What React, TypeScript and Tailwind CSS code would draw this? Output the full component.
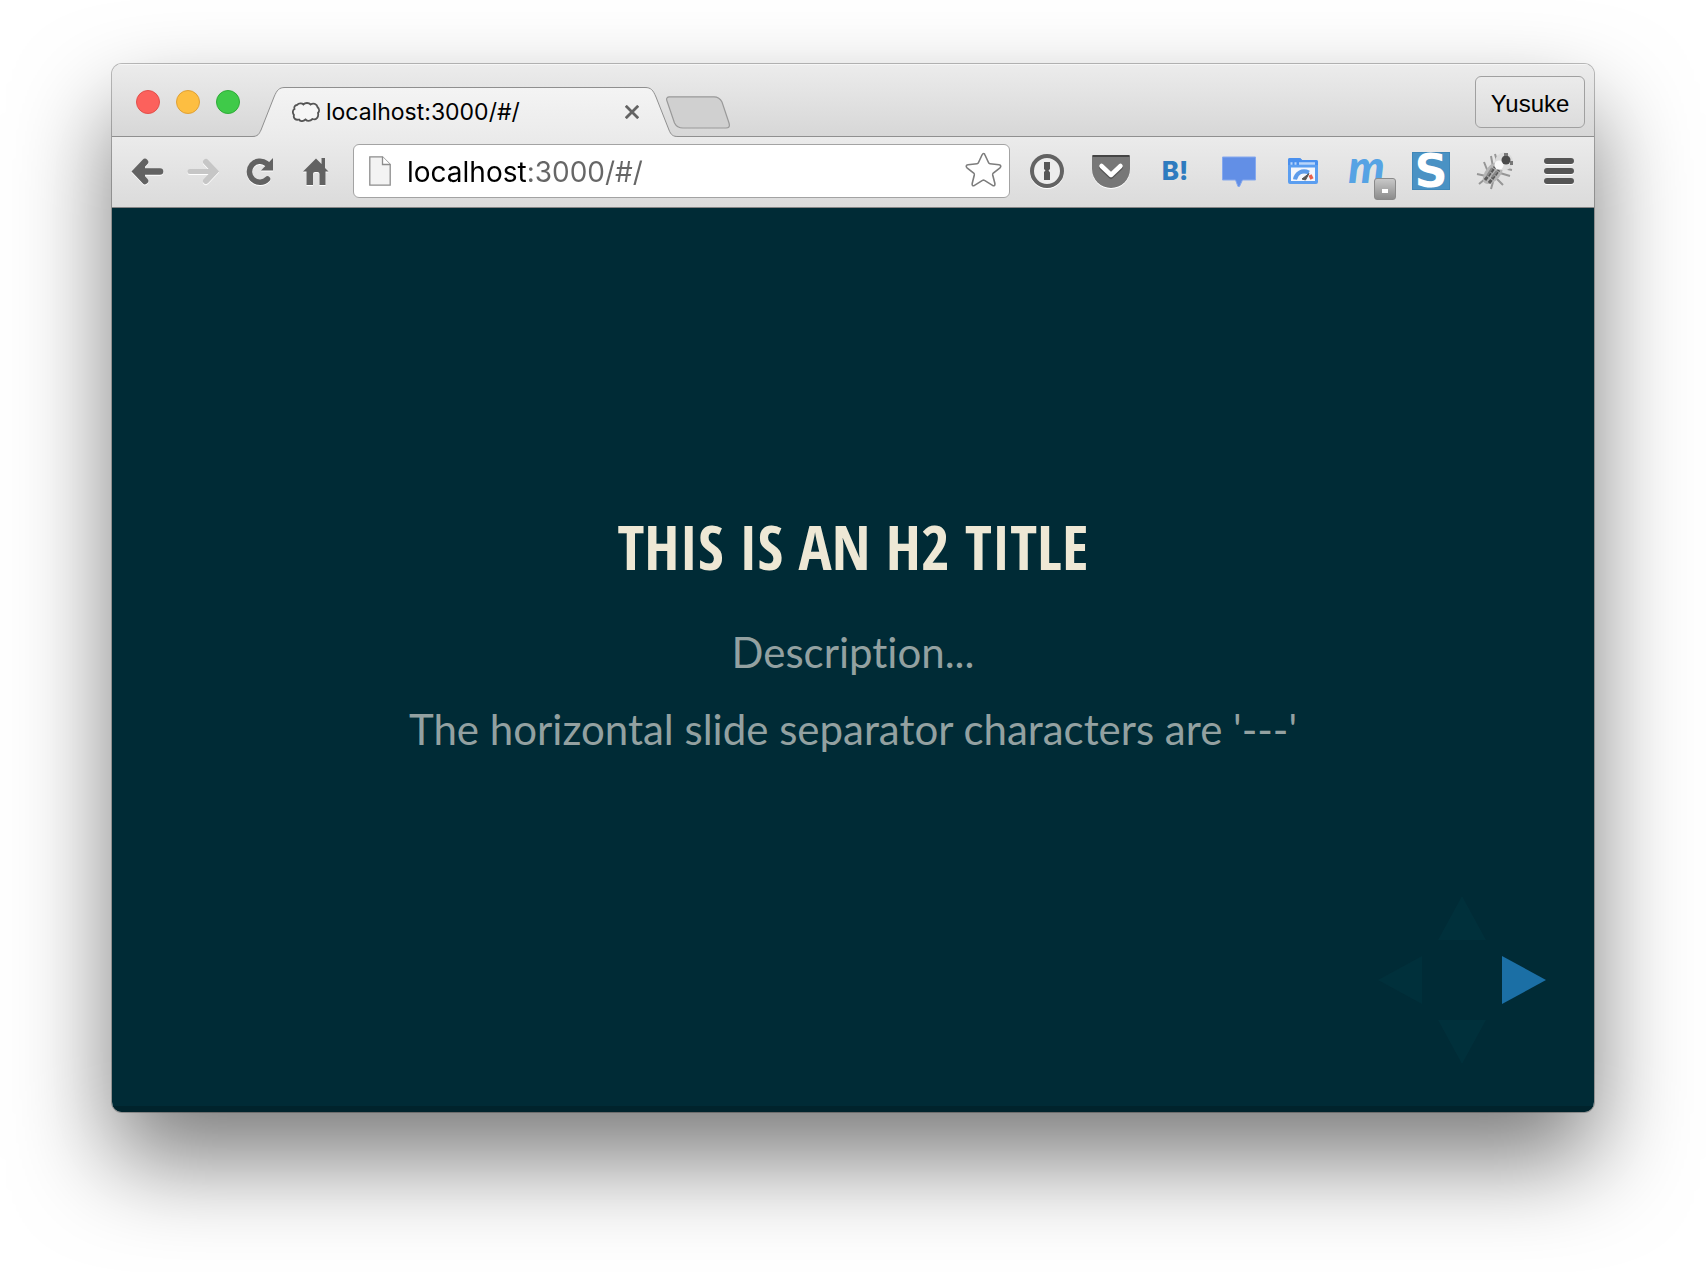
import type { ReactNode } from 'react';

const ToolbarButton = ({ label, wide, disabled, children }: { label: string; wide?: boolean; disabled?: boolean; children: ReactNode }) => (
  <button
    aria-label={label}
    disabled={disabled}
    className={`relative flex h-[54px] shrink-0 items-center justify-center ${wide ? 'w-16' : 'w-14'}`}
  >
    {children}
  </button>
);

const Icon = ({ children, className = '' }: { children: ReactNode; className?: string }) => (
  <svg viewBox="0 0 40 40" className={`size-10 ${className}`} fill="none" aria-hidden="true">
    {children}
  </svg>
);

const embossed = 'text-[#626262] drop-shadow-[0_1px_0_#fff]';

const Tab = () => (
  <div className="relative z-10 -mb-px ml-4 flex h-[50px] w-[420px] shrink-0 items-center pl-9 pr-[37px]">
    <svg viewBox="0 0 420 50" className="absolute inset-0 h-full w-full overflow-visible" aria-hidden="true">
      <defs>
        <linearGradient id="tab" x1="0" y1="0" x2="0" y2="1">
          <stop offset="0" stopColor="#f4f4f4" />
          <stop offset="1" stopColor="#ebebeb" />
        </linearGradient>
      </defs>
      <path
        d="M-4 50V49.500C2 49.500 3 47 5 43L18 10C21 3 23 .5 29 .5H389C395 .5 397 3 400 10L413 43C415 48 417 49.500 422 49.500V50Z"
        fill="url(#tab)"
      />
      <path
        d="M-4 49.500C2 49.500 3 47 5 43L18 10C21 3 23 .5 29 .5H389C395 .5 397 3 400 10L413 43C415 48 417 49.500 422 49.500"
        fill="none"
        stroke="#8f8f8f"
      />
    </svg>
    <svg viewBox="0 0 28 20" className="relative mr-1.5 h-5 w-7" aria-hidden="true">
      <path
        d="M5 3C7 1 10 1 11.500 2.500C13 .5 17 .5 18.500 2.500C21 .8 25 1.500 25.500 5C27.500 7 27.500 9.500 26 11C27 15 24 18.500 20.500 17C18 19.500 15 19 13.500 17.500C11 19.800 8 19.500 7 17.500C3.500 18.500 1 16 2 13C.3 11 .5 8 2.500 7C1.800 5 3 3.200 5 3Z"
        fill="#f6f6f6"
        stroke="#555"
        strokeWidth="1.800"
      />
    </svg>
    <span className="relative flex-1 text-left text-[23px] leading-7 text-black">localhost:3000/#/</span>
    <button aria-label="Close tab" className="relative size-[14px]">
      <svg viewBox="0 0 14 14" className="size-[14px]" aria-hidden="true">
        <path d="M.8 .8L13.200 13.200M13.200 .8L.8 13.200" stroke="#636363" strokeWidth="2.800" />
      </svg>
    </button>
  </div>
);

const TitleBar = () => (
  <header className="flex h-[73px] items-end border-b border-[#8f8f8f] bg-linear-to-b from-[#ececec] to-[#d7d7d7] pl-6 pr-[9px] shadow-[inset_0_1px_0_#f6f6f6]">
    <div className="mb-[22px] flex gap-4">
      <button aria-label="Close" className="size-6 rounded-full border border-[#e2504b] bg-[#fc615c]" />
      <button aria-label="Minimize" className="size-6 rounded-full border border-[#e0a136] bg-[#fdbe41]" />
      <button aria-label="Zoom" className="size-6 rounded-full border border-[#2fac38] bg-[#3fca49]" />
    </div>
    <Tab />
    <button aria-label="New tab" className="-ml-2.5 mb-[7px] shrink-0">
      <svg viewBox="0 0 64 33" className="h-[33px] w-16" aria-hidden="true">
        <path
          d="M3.500 .8H48C52 .8 54 2 56 6L63 27C64 30.500 63 32 60 32H17C12 32 10 30 8.500 27L1 5C0 2.500 1 .8 3.500 .8Z"
          fill="#d0d0d0"
          stroke="#999"
          strokeWidth="1.200"
        />
      </svg>
    </button>
    <button className="mb-2 ml-auto h-[52px] w-[110px] rounded-md border border-[#a0a0a0] bg-linear-to-b from-[#ebebeb] to-[#dcdcdc] pt-1 font-['Liberation_Sans',sans-serif] text-2xl text-black">
      Yusuke
    </button>
  </header>
);

const AddressBar = () => (
  <div className="ml-[9px] flex h-[54px] min-w-0 flex-1 items-center rounded-md border border-[#a3a3a3] bg-white pl-[15px] pr-[5px]">
    <svg viewBox="0 0 22 30" className="h-[30px] w-[22px] shrink-0" aria-hidden="true">
      <path d="M.8 .8H13.500L21.200 8.500V29.200H.8Z" fill="#f3f3f3" stroke="#8c8c8c" strokeWidth="1.300" />
      <path d="M13.500 .8V8.500H21.200" fill="#fff" stroke="#8c8c8c" strokeWidth="1.300" />
    </svg>
    {/* host in black, the rest of the address in grey */}
    <input
      aria-label="Address"
      defaultValue="localhost:3000/#/"
      className="ml-4 min-w-0 flex-1 bg-[linear-gradient(to_right,#000_119px,#666_119px)] bg-clip-text pt-0.5 text-[28px] leading-9 text-transparent caret-black outline-none"
    />
    <button aria-label="Bookmark this page" className="shrink-0">
      <Icon>
        <path
          d="M18 4C19 2 20.500 2 21 4L24.500 11.500C24.800 12.200 25.300 12.600 26 12.700L35 13.800C37 14 37.300 15.500 36 16.800L29.300 22C28.800 22.500 28.500 23 28.700 24L30.900 32.500C31.200 34.500 30 35.300 28.500 34.300L20.500 29.400C19.800 29 19.200 29 18.500 29.400L10.500 34.300C9 35.300 7.800 34.500 8.200 32.500L10.300 24C10.500 23 10.200 22.500 9.700 22L3 16.800C1.700 15.500 2 14 4 13.800L13 12.700C13.700 12.600 14.200 12.200 14.500 11.500Z"
          stroke="#7d7d7d"
          strokeWidth="1.600"
        />
      </Icon>
    </button>
  </div>
);

const Extensions = () => (
  <>
    <ToolbarButton label="1Password" wide>
      <Icon className="drop-shadow-[0_1px_0_#fff]">
        <circle cx="20" cy="20" r="15" fill="#ededed" stroke="#626262" strokeWidth="4" />
        <path d="M17 11H23V18L21.500 19.500L23 21.500V29H17V21L18.500 19.500L17 18Z" fill="#555" />
      </Icon>
    </ToolbarButton>
    <ToolbarButton label="Pocket" wide>
      <Icon className="drop-shadow-[0_1px_0_#fff]">
        <path d="M1 6Q1 4 3 4H37Q39 4 39 6V18A19 19 0 0 1 1 18Z" fill="#777" />
        <path d="M1.500 5H38.500" stroke="#444" strokeWidth="2" />
        <path d="M10.500 16.500L20 25.500L29.500 16.500" stroke="#555" strokeWidth="5" strokeLinecap="round" strokeLinejoin="round" />
        <path d="M10.500 15L20 24L29.500 15" stroke="#fff" strokeWidth="4.500" strokeLinecap="round" strokeLinejoin="round" />
      </Icon>
    </ToolbarButton>
    <ToolbarButton label="Hatena Bookmark" wide>
      <span className="text-[26px] font-extrabold leading-8 text-[#2e7bbf]">B!</span>
    </ToolbarButton>
    <ToolbarButton label="Comments" wide>
      <Icon>
        <path d="M3.500 6H36.500V29H23.500L20.500 35.500H19L16.500 29H3.500Z" fill="#628fe6" stroke="#86a9ee" />
      </Icon>
    </ToolbarButton>
    <ToolbarButton label="PageSpeed" wide>
      <Icon>
        <path d="M5 9Q5 7 7 7H16Q18 7 19 9H33Q35 9 35 11V31Q35 33 33 33H7Q5 33 5 31Z" fill="#5b9ef0" />
        <path d="M5 9Q5 7 7 7H16Q18 7 19 9H33Q35 9 35 11V14H5Z" fill="#4a90ee" />
        <path d="M8 16.500H32V30H8Z" fill="#f3f6fc" />
        <path d="M7.500 12.500H9.500M11.500 12.500H13.500M16 12.500H32" stroke="#b9d5fa" strokeWidth="2.500" />
        <path d="M12 28.500C13 22 19 18.500 26 21.500" stroke="#5c9bea" strokeWidth="4" />
        <path d="M19 28L26 22.500L22.500 29Z" fill="#555" stroke="#555" />
        <path d="M27 24L29 28" stroke="#e8604c" strokeWidth="3.500" />
      </Icon>
    </ToolbarButton>
    <ToolbarButton label="Extension m" wide>
      <span className="pb-2.5 pr-px font-['Lato',sans-serif] text-[46px] font-black italic leading-10 text-[#56a3e4]">m</span>
      <span className="absolute -bottom-0.5 right-[3px] flex size-[22px] items-center justify-center rounded-[3px] border border-[#8a8a8a] bg-linear-to-b from-[#c8c8c8] to-[#8c8c8c] pt-1">
        <span className="h-1 w-1.5 bg-white" />
      </span>
    </ToolbarButton>
    <ToolbarButton label="Extension S" wide>
      <span className="flex size-[38px] items-center justify-center border border-[#3f87b8] bg-[#4a92c4] font-['DejaVu_Sans',sans-serif] text-[46px] font-bold leading-9 text-white">
        S
      </span>
    </ToolbarButton>
    <ToolbarButton label="Debugger" wide>
      <Icon>
        <path
          d="M13 21L9 11M18 16L16 5M11 25L2 23M10 28L4 33M18 31L16 38M22 28L28 34M25 22L35 25M28 17L37 19M22 10L20 3"
          stroke="#969696"
          strokeWidth="2"
        />
        <ellipse cx="18" cy="22" rx="7.500" ry="13" transform="rotate(40 18 22)" fill="#b5b5b5" />
        <path d="M10 29L20 16M14 32L24 19" stroke="#5a5a5a" strokeWidth="3" strokeDasharray="4 1" />
        <path d="M12 25L17 17M17 26L22 20" stroke="#888" strokeWidth="2" />
        <circle cx="29" cy="10.500" r="9" fill="#dcdcdc" />
        <circle cx="24" cy="14" r="4.500" fill="#f8f8f8" />
        <circle cx="31" cy="9" r="4.500" fill="#4a4a4a" />
        <path d="M29 2H33V5H29ZM35 10H38V14H35Z" fill="#777" />
      </Icon>
    </ToolbarButton>
  </>
);

const Toolbar = () => (
  <nav className="flex items-center border-b border-[#858585] bg-linear-to-b from-[#ebebeb] to-[#dbdbdb] pb-[9px] pl-2 pr-[3px] pt-[7px]">
    <ToolbarButton label="Back">
      <Icon className={embossed}>
        <path d="M32 20.500H10" stroke="currentColor" strokeWidth="6.500" strokeLinecap="round" />
        <path d="M17 11L8 20.500L17 30" fill="currentColor" stroke="currentColor" strokeWidth="6.500" strokeLinecap="round" />
      </Icon>
    </ToolbarButton>
    <ToolbarButton label="Forward" disabled>
      <Icon className="text-[#c6c6c6] drop-shadow-[0_1px_0_#fff]">
        <path d="M6 20.500H29" stroke="currentColor" strokeWidth="5" strokeLinecap="round" />
        <path d="M22 11L31 20.500L22 30" stroke="currentColor" strokeWidth="6" strokeLinecap="round" />
      </Icon>
    </ToolbarButton>
    <ToolbarButton label="Reload">
      <Icon className={embossed}>
        <path d="M27.500 28A10.500 10.500 0 1 1 26.500 12.500" stroke="currentColor" strokeWidth="5.500" strokeLinecap="round" />
        <path d="M33 7V19.500H21Z" fill="currentColor" />
      </Icon>
    </ToolbarButton>
    <ToolbarButton label="Home">
      <Icon className={embossed}>
        <path d="M20 7.500L25.500 13V7H29V17L32.500 20.500H29.500V34H23.500V23Q23.500 21 21.500 21H19Q17 21 17 23V34H10.500V20.500H7Z" fill="currentColor" />
      </Icon>
    </ToolbarButton>
    <AddressBar />
    <div className="ml-[5px] flex">
      <Extensions />
      <ToolbarButton label="Menu" wide>
        <Icon className="drop-shadow-[0_1px_0_#fff]">
          <path d="M8 10H32M8 20H32M8 30H32" stroke="#555" strokeWidth="6" strokeLinecap="round" />
        </Icon>
      </ToolbarButton>
    </div>
  </nav>
);

const arrows = [
  { label: 'Previous slide', place: 'col-start-1 row-start-2', points: '44,20 44,68 0,44', color: 'text-[#00303b]' },
  { label: 'Next slide', place: 'col-start-3 row-start-2', points: '0,20 0,68 44,44', color: 'text-[#1b6fa5]' },
  { label: 'Slide above', place: 'col-start-2 row-start-1', points: '20,44 68,44 44,0', color: 'text-[#00303b]' },
  { label: 'Slide below', place: 'col-start-2 row-start-3', points: '20,0 68,0 44,44', color: 'text-[#00303b]' },
];

const SlideControls = () => (
  <aside className="absolute bottom-[42px] right-12 grid grid-cols-[44px_80px_44px] grid-rows-[44px_80px_44px]">
    {arrows.map((arrow) => {
      const sideways = arrow.place.includes('row-start-2');
      return (
        <button key={arrow.label} aria-label={arrow.label} className={`${arrow.place} ${arrow.color} flex items-center justify-center`}>
          <svg
            viewBox={sideways ? '0 20 44 48' : '20 0 48 44'}
            className={sideways ? 'h-12 w-11' : 'h-11 w-12'}
            fill="currentColor"
            aria-hidden="true"
          >
            <polygon points={arrow.points} />
          </svg>
        </button>
      );
    })}
  </aside>
);

const Slide = () => (
  <main className="relative flex flex-1 flex-col items-center justify-center border-b-[6px] border-[#00232c] bg-[#002b36] pb-[50px] text-center font-['Lato',sans-serif] text-[42px] leading-[50px] text-[#93a1a1] [font-variant-ligatures:none]">
    <h2 className="font-['Open_Sans_Condensed','Roboto_Condensed',sans-serif] text-[62px] font-bold uppercase leading-[72px] text-[#eee8d5]">
      This is an H2 title
    </h2>
    <p className="mt-[45px]">Description...</p>
    <p className="mt-[27px]">The horizontal slide separator characters are '---'</p>
    <SlideControls />
  </main>
);

const App = () => (
  <div className="flex min-h-screen bg-white px-28 pb-40 pt-16 font-['Inter',sans-serif]">
    <div className="flex min-w-0 flex-1 flex-col rounded-[10px] shadow-[0_0_0_1px_rgba(0,0,0,0.25),0_48px_96px_rgba(0,0,0,0.52)]">
      <div className="flex flex-1 flex-col overflow-hidden rounded-[10px]">
        <TitleBar />
        <Toolbar />
        <Slide />
      </div>
    </div>
  </div>
);

export default App;
